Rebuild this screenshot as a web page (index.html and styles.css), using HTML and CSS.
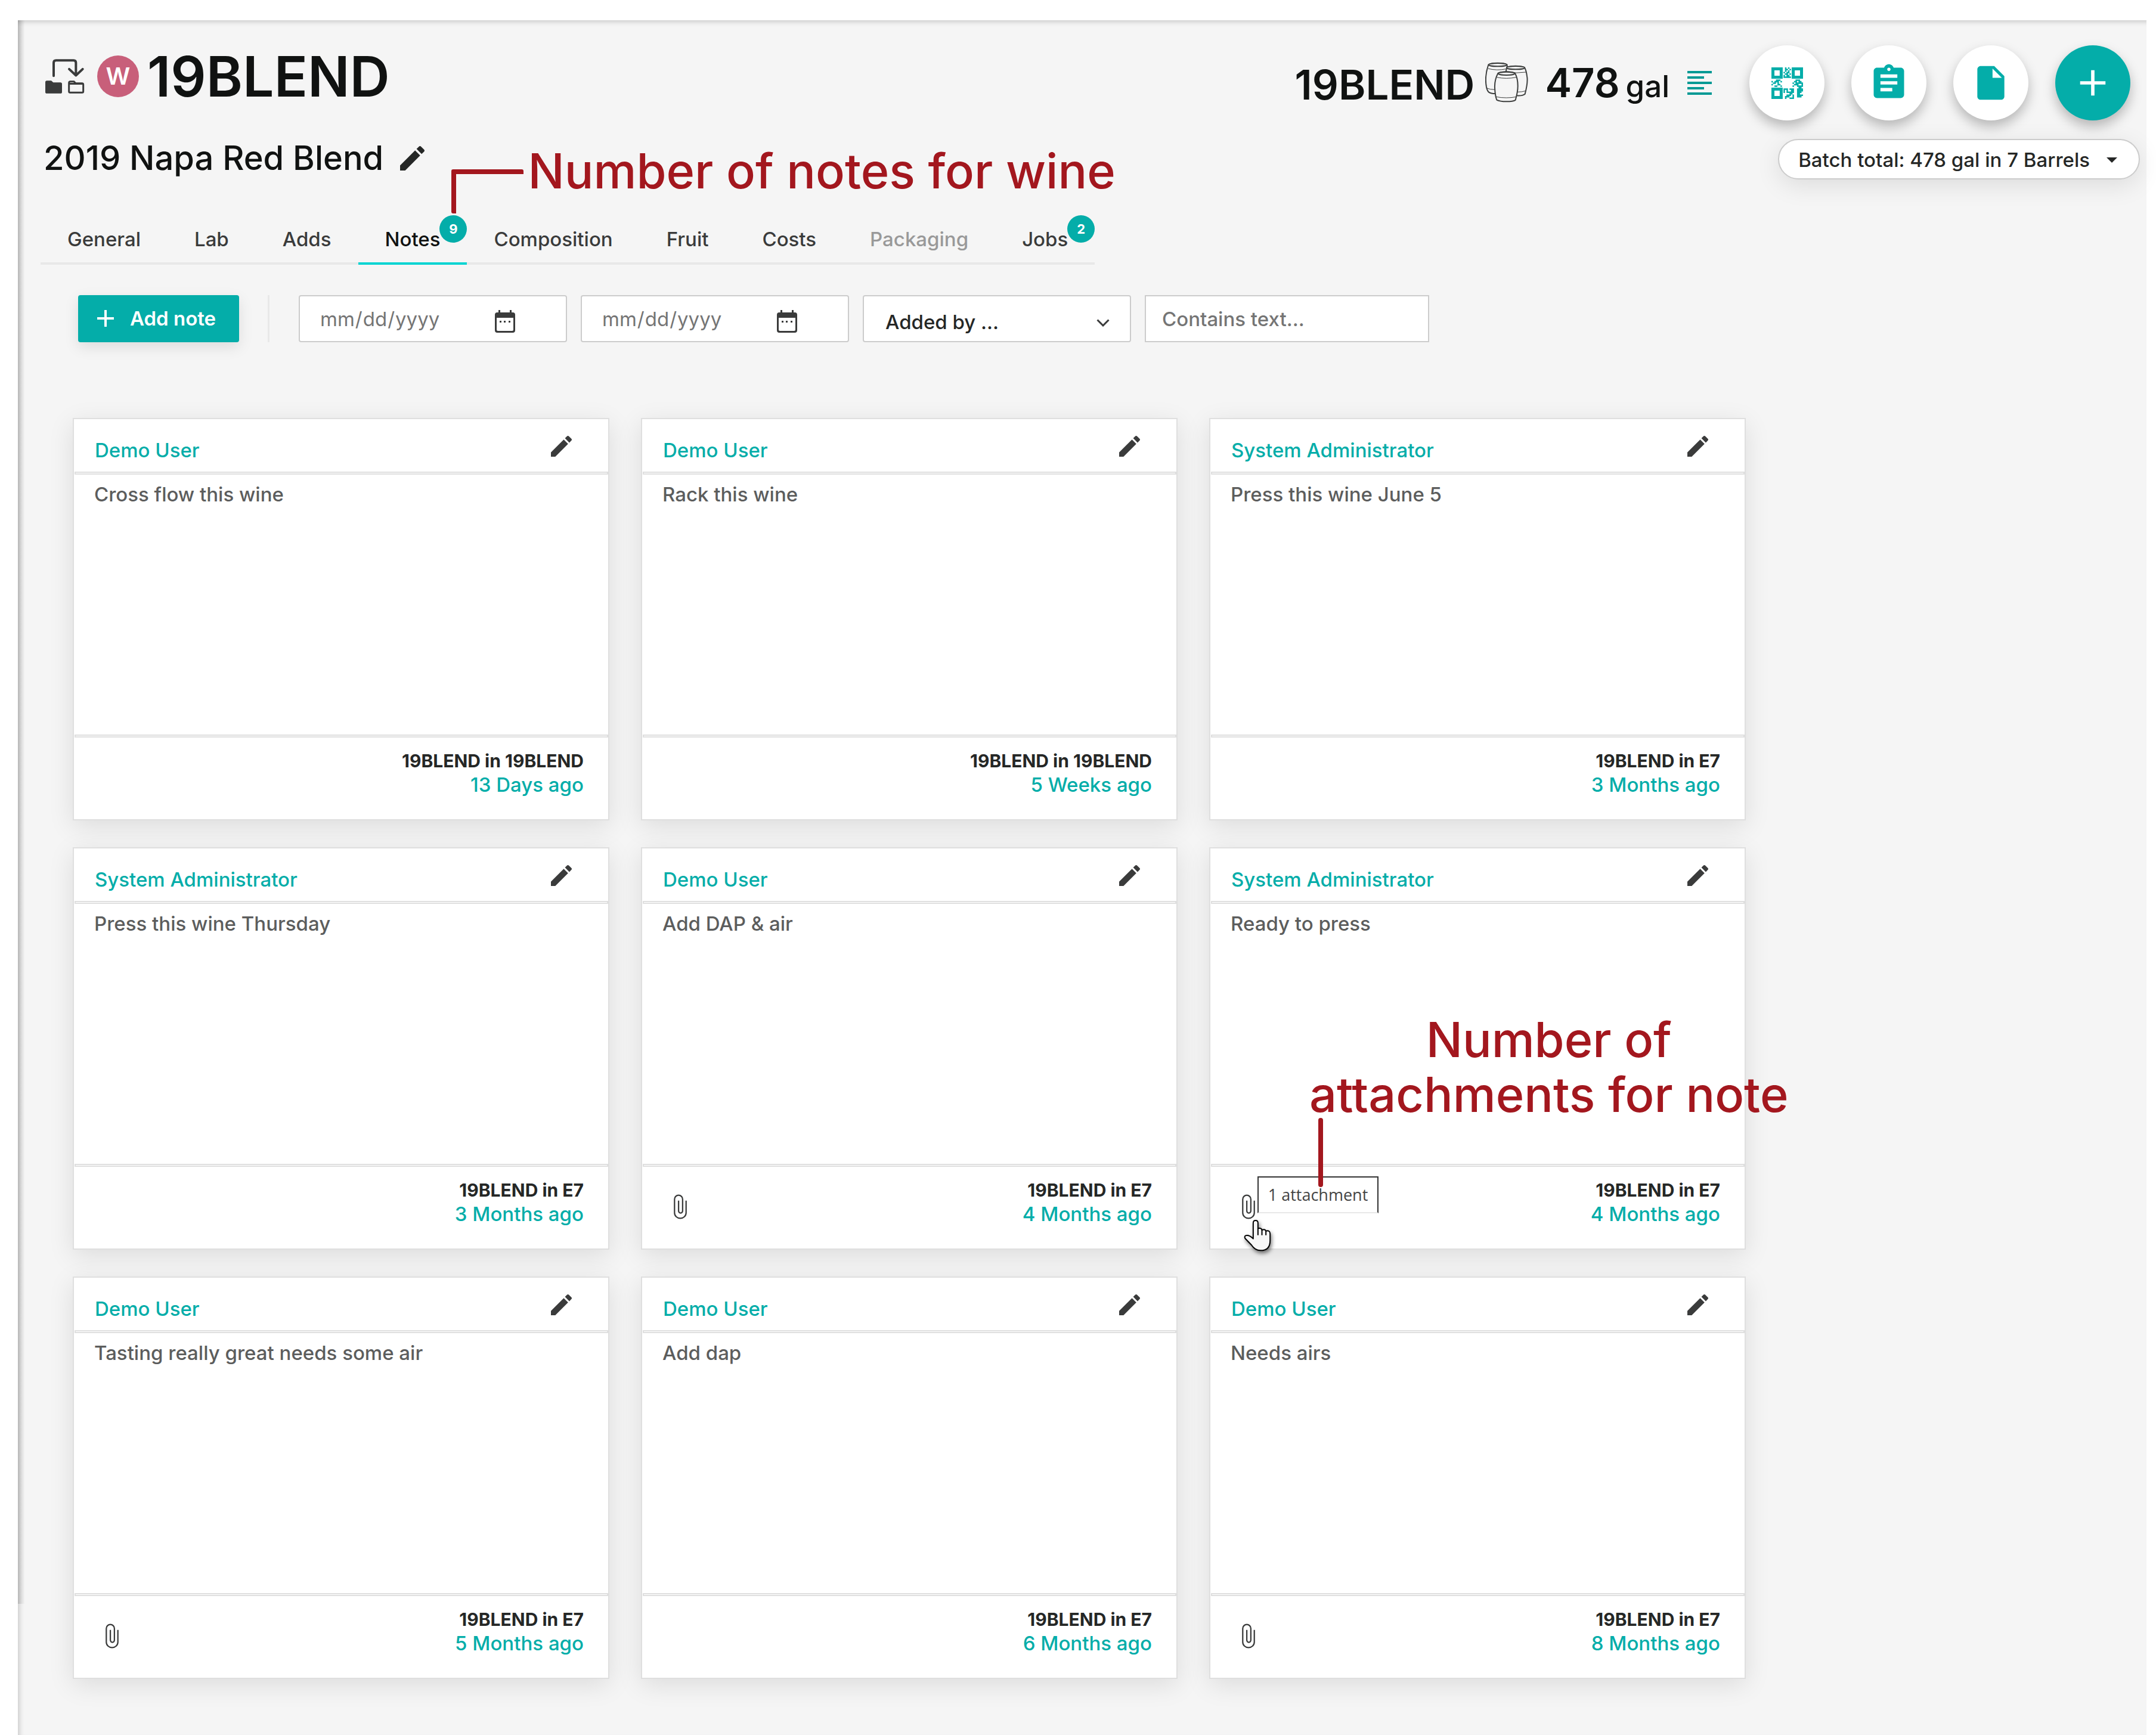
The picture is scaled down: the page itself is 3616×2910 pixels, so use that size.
FILE: index.html
```html
<!DOCTYPE html>
<html lang="en">
<head>
    <meta charset="UTF-8">
    <meta name="viewport" content="width=device-width, initial-scale=1.0">
    <title>19BLEND - Notes</title>
    <link rel="stylesheet" href="styles.css">
</head>
<body>

    <!-- Shared icons -->
    <svg class="icon-defs" aria-hidden="true">
        <symbol id="icon-pencil" viewBox="3 3 18 18">
            <path d="M3 17.25V21h3.75L17.81 9.94l-3.75-3.75L3 17.25zM20.71 7.04c.39-.39.39-1.02 0-1.41l-2.34-2.34c-.39-.39-1.02-.39-1.41 0l-1.83 1.83 3.75 3.75 1.83-1.83z"/>
        </symbol>
        <symbol id="icon-clip" viewBox="36 128 68 128">
            <path d="M100 160V224a30 28 0 0 1-60 0V153a21 21 0 0 1 42 0V213a10 11 0 0 1-21 0V160" fill="none" stroke="currentColor" stroke-width="7"/>
        </symbol>
        <symbol id="icon-calendar" viewBox="0 0 34 38">
            <path fill-rule="evenodd" d="M6 0h3v4h16V0h3v4h2q4 0 4 4v26q0 4-4 4H4q-4 0-4-4V8q0-4 4-4h2zM3 13v20q0 2 2 2h24q2 0 2-2V13z"/>
            <path d="M8 18h3v3H8zM15 18h3v3h-3zM23 18h3v3h-3z"/>
        </symbol>
    </svg>

    <main class="panel">
        <header class="header">
            <div class="header-left">
                <div class="title-row">
                    <svg class="icon-transfer" viewBox="0 0 198 176">
                        <path d="M42 84V18q0-12 12-12h88q12 0 12 12v62M120 50l34 32 34-32" fill="none" stroke="#3a3b3b" stroke-width="12" stroke-linecap="round" stroke-linejoin="round"/>
                        <path d="M0 116q0-8 8-8h22l10 9h36q8 0 8 8v40q0 8-8 8H8q-8 0-8-8z" fill="#3a3b3b"/>
                        <path d="M119 120q0-7 7-7h18l9 9h32q6 0 6 6v34q0 6-6 6h-60q-6 0-6-6zM119 124h72" fill="none" stroke="#3a3b3b" stroke-width="9"/>
                    </svg>
                    <span class="wine-badge">W</span>
                    <h1>19BLEND</h1>
                </div>
                <div class="subtitle-row">
                    <h2>2019 Napa Red Blend</h2>
                    <button class="icon-button" aria-label="Edit name"><svg class="pencil-large"><use href="#icon-pencil"/></svg></button>
                </div>
            </div>

            <div class="header-right">
                <div class="action-row">
                    <div class="summary">
                        <span class="summary-name">19BLEND</span>
                        <svg class="icon-barrels" viewBox="40 40 216 202">
                            <path d="M56 53Q36 110 46 165Q50 184 58 191Q72 200 100 198L150 120L150 53Q138 44 103 44T56 53z"/>
                            <ellipse cx="103" cy="53" rx="45" ry="8"/>
                            <path class="hoop" d="M54 72q45 12 90 2M46 170q18 8 44 8"/>
                            <path d="M148 67Q142 90 142 120L198 208Q228 210 240 200Q256 140 250 110Q246 80 238 67Q220 59 193 59T148 67z"/>
                            <ellipse cx="193" cy="68" rx="45" ry="8"/>
                            <path class="hoop" d="M150 88q45 10 94 2M202 190q24 0 42-6"/>
                            <path d="M104 96Q86 130 88 170Q90 210 98 230Q112 238 147 238T192 230Q204 190 204 160Q204 120 190 96Q175 88 147 88T104 96z"/>
                            <ellipse cx="147" cy="97" rx="42" ry="8"/>
                            <path class="hoop" d="M98 116q48 10 98 0M94 214q52 10 104 0"/>
                        </svg>
                        <span class="summary-amount">478<small>gal</small></span>
                        <svg class="icon-lines" viewBox="0 0 41 41">
                            <path d="M0 0h41v4H0zM0 9h28v4H0zM0 18h41v4H0zM0 27h28v4H0zM0 36h41v4H0z"/>
                        </svg>
                    </div>
                    <div class="actions">
                        <button class="round-button" aria-label="QR code">
                            <svg class="icon-qr" viewBox="0 0 21 21">
                                <path fill-rule="evenodd" d="M0 0h7.5v7.5H0zM2 2v3.5h3.5V2zM13.5 0H21v7.5h-7.5zM15.5 2v3.5H19V2zM0 13.5h7.5V21H0zM2 15.5V19h3.5v-3.5z"/>
                                <path d="M9 0h1v2H9zM11 0h1v1h-1zM10 1h1v1h-1zM12 1h1v1h-1zM8 3h1v1H8zM9 2h1v1H9zM11 2h1v2h-1zM10 3h1v1h-1zM9 4h2v1H9zM12 4h1v1h-1zM8 5h1v1H8zM10 5h1v2h-1zM11 5h1v1h-1zM8 6h5v1H8zM3 8h3v1H3zM6 9h1v1H6zM0 9h1v1H0zM2 9h2v1H2zM1 10h2v1H1zM4 9h1v3H4zM0 11h1v1H0zM2 12h2v1H2zM5 11h1v1H5zM6 12h1v1H6zM16 8h3v1h-3zM15 9h2v1h-2zM18 9h2v1h-2zM14 10h1v1h-1zM16 10h3v1h-3zM15 11h3v1h-3zM19 10h2v1h-2zM20 11h1v2h-1zM14 12h1v1h-1zM17 12h3v1h-3zM18 13h2v2h-2zM8 14h3v1H8zM12 14h3v1h-3zM10 15h1v2h-1zM8 15h1v2H8zM13 15h2v2h-2zM11 16h3v1h-3zM12 17h2v1h-2zM10 18h3v1h-3zM14 18h1v3h-1zM9 19h3v1H9zM9 20h1v1H9zM12 20h3v1h-3zM20 14h1v2h-1zM17 14h2v2h-2zM17 16h2v4h-2zM19 15h1v2h-1zM19 18h2v1h-2zM18 19h2v1h-2z"/>
                            </svg>
                        </button>
                        <button class="round-button" aria-label="Tasks">
                            <svg viewBox="0 0 24 24"><path d="M19 3h-4.180C14.400 1.840 13.300 1 12 1s-2.400.84-2.820 2H5c-1.100 0-2 .9-2 2v14c0 1.100.9 2 2 2h14c1.100 0 2-.9 2-2V5c0-1.100-.9-2-2-2zm-7 0c.55 0 1 .45 1 1s-.45 1-1 1-1-.45-1-1 .45-1 1-1zm2 14H7v-2h7v2zm3-4H7v-2h10v2zm0-4H7V7h10v2z"/></svg>
                        </button>
                        <button class="round-button" aria-label="Document">
                            <svg viewBox="0 0 24 24"><path d="M6 2c-1.100 0-1.990.9-1.990 2L4 20c0 1.100.89 2 1.990 2H18c1.100 0 2-.9 2-2V8l-6-6H6zm7 7V3.500L18.500 9H13z"/></svg>
                        </button>
                        <button class="round-button primary" aria-label="New">
                            <svg viewBox="0 0 24 24"><path d="M11 4.500h2V11h6.500v2H13v6.500h-2V13H4.500v-2H11z"/></svg>
                        </button>
                    </div>
                </div>
                <button class="batch-total">Batch total: 478 gal in 7 Barrels <span class="caret"></span></button>
            </div>
        </header>

        <nav class="tabs">
            <a href="#" class="tab">General</a>
            <a href="#" class="tab">Lab</a>
            <a href="#" class="tab">Adds</a>
            <div class="tab-wrap">
                <a href="#" class="tab active">Notes<span class="count">9</span></a>
                <div class="callout callout-notes">
                    <span class="elbow"></span>
                    <p>Number of notes for wine</p>
                </div>
            </div>
            <a href="#" class="tab">Composition</a>
            <a href="#" class="tab">Fruit</a>
            <a href="#" class="tab">Costs</a>
            <a href="#" class="tab disabled">Packaging</a>
            <a href="#" class="tab">Jobs<span class="count">2</span></a>
        </nav>

        <form class="toolbar">
            <button type="button" class="add-note">
                <svg viewBox="0 0 28 28"><path d="M12 0h4v12h12v4H16v12h-4V16H0v-4h12z"/></svg>
                Add note
            </button>
            <span class="divider"></span>
            <label class="field">
                <input type="date" aria-label="From date">
                <svg class="icon-calendar"><use href="#icon-calendar"/></svg>
            </label>
            <label class="field">
                <input type="date" aria-label="To date">
                <svg class="icon-calendar"><use href="#icon-calendar"/></svg>
            </label>
            <label class="field">
                <select aria-label="Added by">
                    <option>Added by ...</option>
                </select>
                <svg class="icon-chevron" viewBox="0 0 22 13"><path d="M1.500 1.500l9.500 9.500 9.500-9.500" fill="none" stroke="#3a3b3b" stroke-width="3"/></svg>
            </label>
            <input type="text" class="search" placeholder="Contains text..." aria-label="Contains text">
        </form>

        <section class="notes">
            <article class="note">
                <div class="note-head">
                    <a href="#">Demo User</a>
                    <button class="icon-button" aria-label="Edit note"><svg class="pencil"><use href="#icon-pencil"/></svg></button>
                </div>
                <hr>
                <p class="note-body">Cross flow this wine</p>
                <hr>
                <div class="note-foot">
                    <div class="note-meta"><strong>19BLEND in 19BLEND</strong><span>13 Days ago</span></div>
                </div>
            </article>

            <article class="note">
                <div class="note-head">
                    <a href="#">Demo User</a>
                    <button class="icon-button" aria-label="Edit note"><svg class="pencil"><use href="#icon-pencil"/></svg></button>
                </div>
                <hr>
                <p class="note-body">Rack this wine</p>
                <hr>
                <div class="note-foot">
                    <div class="note-meta"><strong>19BLEND in 19BLEND</strong><span>5 Weeks ago</span></div>
                </div>
            </article>

            <article class="note">
                <div class="note-head">
                    <a href="#">System Administrator</a>
                    <button class="icon-button" aria-label="Edit note"><svg class="pencil"><use href="#icon-pencil"/></svg></button>
                </div>
                <hr>
                <p class="note-body">Press this wine June 5</p>
                <hr>
                <div class="note-foot">
                    <div class="note-meta"><strong>19BLEND in E7</strong><span>3 Months ago</span></div>
                </div>
            </article>

            <article class="note">
                <div class="note-head">
                    <a href="#">System Administrator</a>
                    <button class="icon-button" aria-label="Edit note"><svg class="pencil"><use href="#icon-pencil"/></svg></button>
                </div>
                <hr>
                <p class="note-body">Press this wine Thursday</p>
                <hr>
                <div class="note-foot">
                    <div class="note-meta"><strong>19BLEND in E7</strong><span>3 Months ago</span></div>
                </div>
            </article>

            <article class="note">
                <div class="note-head">
                    <a href="#">Demo User</a>
                    <button class="icon-button" aria-label="Edit note"><svg class="pencil"><use href="#icon-pencil"/></svg></button>
                </div>
                <hr>
                <p class="note-body">Add DAP &amp; air</p>
                <hr>
                <div class="note-foot">
                    <div class="attachment">
                        <button class="icon-button" aria-label="Attachments"><svg class="clip"><use href="#icon-clip"/></svg></button>
                    </div>
                    <div class="note-meta"><strong>19BLEND in E7</strong><span>4 Months ago</span></div>
                </div>
            </article>

            <article class="note">
                <div class="note-head">
                    <a href="#">System Administrator</a>
                    <button class="icon-button" aria-label="Edit note"><svg class="pencil"><use href="#icon-pencil"/></svg></button>
                </div>
                <hr>
                <p class="note-body">Ready to press</p>
                <hr>
                <div class="note-foot">
                    <div class="attachment">
                        <button class="icon-button" aria-label="Attachments"><svg class="clip"><use href="#icon-clip"/></svg></button>
                        <span class="tooltip" role="tooltip">1 attachment</span>
                        <svg class="pointer" viewBox="44 258 140 162">
                            <path d="M94 356V277q0-13 12-13t12 13v27q18-4 20 8 17-6 20 5 21-5 21 14v34q0 50-48 50-28 0-46-28L53 354q-6-15 10-15 14 0 31 17z" fill="#f7f7f7" stroke="#000" stroke-width="6" stroke-linejoin="round"/>
                            <path d="M118 302v36M138 312v26M158 318v20" fill="none" stroke="#000" stroke-width="6"/>
                        </svg>
                        <div class="callout callout-attachments">
                            <p>Number of<br>attachments for note</p>
                            <span class="stem"></span>
                        </div>
                    </div>
                    <div class="note-meta"><strong>19BLEND in E7</strong><span>4 Months ago</span></div>
                </div>
            </article>

            <article class="note">
                <div class="note-head">
                    <a href="#">Demo User</a>
                    <button class="icon-button" aria-label="Edit note"><svg class="pencil"><use href="#icon-pencil"/></svg></button>
                </div>
                <hr>
                <p class="note-body">Tasting really great needs some air</p>
                <hr>
                <div class="note-foot">
                    <div class="attachment">
                        <button class="icon-button" aria-label="Attachments"><svg class="clip"><use href="#icon-clip"/></svg></button>
                    </div>
                    <div class="note-meta"><strong>19BLEND in E7</strong><span>5 Months ago</span></div>
                </div>
            </article>

            <article class="note">
                <div class="note-head">
                    <a href="#">Demo User</a>
                    <button class="icon-button" aria-label="Edit note"><svg class="pencil"><use href="#icon-pencil"/></svg></button>
                </div>
                <hr>
                <p class="note-body">Add dap</p>
                <hr>
                <div class="note-foot">
                    <div class="note-meta"><strong>19BLEND in E7</strong><span>6 Months ago</span></div>
                </div>
            </article>

            <article class="note">
                <div class="note-head">
                    <a href="#">Demo User</a>
                    <button class="icon-button" aria-label="Edit note"><svg class="pencil"><use href="#icon-pencil"/></svg></button>
                </div>
                <hr>
                <p class="note-body">Needs airs</p>
                <hr>
                <div class="note-foot">
                    <div class="attachment">
                        <button class="icon-button" aria-label="Attachments"><svg class="clip"><use href="#icon-clip"/></svg></button>
                    </div>
                    <div class="note-meta"><strong>19BLEND in E7</strong><span>8 Months ago</span></div>
                </div>
            </article>
        </section>
    </main>

</body>
</html>
```
FILE: styles.css
```css
* {
    box-sizing: border-box;
}
body {
    margin: 0;
    padding: 34px 16px 0 30px;
    background: #fff;
    font-family: Inter, "Open Sans", sans-serif;
    font-size: 33px;
    line-height: 48px;
    font-weight: 500;
    color: #3a3b3b;
}
h1, h2, p {
    margin: 0;
}
a {
    color: inherit;
    text-decoration: none;
}
button, input, select {
    font: inherit;
    color: inherit;
}
svg {
    display: block;
    flex: none;
    fill: currentColor;
}
.icon-defs {
    position: absolute;
    width: 0;
    height: 0;
}
.icon-button {
    display: block;
    padding: 0;
    border: none;
    background: none;
    cursor: pointer;
}

.panel {
    position: relative;
    min-height: calc(100vh - 34px);
    padding: 42px 11px 93px 38px;
    background: #f5f5f5;
    box-shadow: inset 10px 0 10px -8px rgba(0, 0, 0, 0.2), inset 0 10px 10px -8px rgba(0, 0, 0, 0.2);
}
/* darker edge left by the side menu */
.panel::before {
    content: "";
    position: absolute;
    top: 0;
    bottom: 220px;
    left: 0;
    width: 12px;
    background: linear-gradient(to right, rgba(0, 0, 0, 0.14), rgba(0, 0, 0, 0));
}

/* Header */
.header {
    display: flex;
    justify-content: space-between;
    align-items: flex-start;
}
.header-left {
    padding: 12px 0 0 5px;
}
.title-row {
    display: flex;
    align-items: center;
}
.icon-transfer {
    width: 66px;
    height: 59px;
    margin: 0 21px 0 3px;
}
.wine-badge {
    width: 70px;
    height: 70px;
    margin-right: 14px;
    border-radius: 50%;
    background: #c85f7a;
    color: #fff;
    font-size: 40px;
    line-height: 70px;
    font-weight: 600;
    text-align: center;
}
h1 {
    font-size: 93px;
    line-height: 80px;
    font-weight: 600;
    color: #101211;
}
.subtitle-row {
    display: flex;
    align-items: center;
    gap: 28px;
    margin-top: 65px;
    color: #252726;
}
h2 {
    font-size: 56px;
    line-height: 64px;
    font-weight: 500;
    color: #101211;
}
.pencil-large {
    width: 41px;
    height: 41px;
}
.header-right {
    display: flex;
    flex-direction: column;
    align-items: flex-end;
    gap: 31px;
}
.action-row {
    display: flex;
    align-items: center;
    gap: 63px;
    margin-right: 16px;
}
.summary {
    display: flex;
    align-items: center;
    padding-top: 6px;
    color: #101211;
    font-size: 69px;
    line-height: 80px;
    font-weight: 600;
}
.icon-barrels {
    width: 72px;
    height: 68px;
    margin: 0 28px 8px 18px;
    fill: #f5f5f5;
    stroke: #3d3f3e;
    stroke-width: 6;
}
.icon-barrels .hoop {
    fill: none;
    stroke-width: 3;
}
.summary-amount {
    display: flex;
    align-items: baseline;
    gap: 10px;
    font-size: 67px;
}
.summary small {
    font-size: 51px;
    font-weight: 500;
}
.icon-lines {
    width: 41px;
    height: 41px;
    margin: 0 0 6px 30px;
    color: #009994;
}
.actions {
    display: flex;
    gap: 45px;
}
.round-button {
    display: flex;
    align-items: center;
    justify-content: center;
    width: 126px;
    height: 126px;
    padding: 0;
    border: none;
    border-radius: 50%;
    background: #fff;
    color: #04ada9;
    box-shadow: 0 10px 20px rgba(0, 0, 0, 0.26);
    cursor: pointer;
}
.round-button svg {
    width: 68px;
    height: 68px;
}
.round-button .icon-qr {
    width: 53px;
    height: 53px;
}
.round-button.primary {
    background: #04ada9;
    color: #fff;
}
.batch-total {
    display: flex;
    align-items: center;
    gap: 28px;
    height: 68px;
    padding: 2px 36px 0 32px;
    border: 2px solid #ccc;
    border-radius: 34px;
    background: #fff;
    color: #252726;
    box-shadow: 0 10px 40px rgba(0, 0, 0, 0.1);
    cursor: pointer;
}
.caret {
    border: 9px solid transparent;
    border-top-color: #252726;
    border-bottom: none;
}

/* Tabs */
.tabs {
    display: flex;
    width: fit-content;
    margin-top: 54px;
    border-bottom: 4px solid #e8e8e8;
}
.tab-wrap {
    position: relative;
}
.tab {
    position: relative;
    display: block;
    margin-bottom: -4px;
    padding: 22px 45px 15px;
    border-bottom: 4px solid transparent;
}
.tab.active {
    border-bottom-color: #00d4d2;
    color: #101211;
}
.tab.disabled {
    color: #999;
}
.count {
    position: absolute;
    top: 6px;
    right: 0;
    width: 46px;
    height: 46px;
    border-radius: 50%;
    background: #04ada9;
    color: #fff;
    font-size: 22px;
    line-height: 46px;
    font-weight: 700;
    text-align: center;
}

/* Toolbar */
.toolbar {
    display: flex;
    gap: 23px;
    height: 79px;
    margin-top: 51px;
    padding-left: 63px;
}
.add-note {
    display: flex;
    align-items: center;
    gap: 27px;
    width: 270px;
    padding: 0 0 2px 32px;
    border: none;
    border-radius: 4px;
    background: #04ada9;
    color: #fff;
    font-weight: 600;
    white-space: nowrap;
    box-shadow: 0 8px 24px rgba(0, 0, 0, 0.1);
    cursor: pointer;
}
.add-note svg {
    width: 28px;
    height: 28px;
}
.divider {
    width: 3px;
    margin: 0 26px 0 25px;
    background: #e8e8e8;
}
.field {
    position: relative;
    width: 450px;
}
.field input, .field select, .search {
    width: 100%;
    height: 79px;
    padding: 0 33px;
    border: 2px solid #ccc;
    border-radius: 4px;
    background: #fff;
}
.field input {
    color: #757575;
    font-weight: 400;
}
.field input::-webkit-calendar-picker-indicator {
    opacity: 0;
}
.field select {
    appearance: none;
    padding: 10px 36px 0;
    color: #252726;
}
.search {
    width: 477px;
    padding: 0 27px;
    border-radius: 0;
}
.search::placeholder {
    color: #757575;
}
.icon-calendar {
    position: absolute;
    top: 25px;
    right: 87px;
    width: 34px;
    height: 38px;
    pointer-events: none;
}
.icon-chevron {
    position: absolute;
    top: 40px;
    right: 36px;
    width: 22px;
    height: 13px;
    pointer-events: none;
}

/* Notes */
.notes {
    display: grid;
    grid-template-columns: repeat(3, 1fr);
    gap: 45px 53px;
    max-width: 2860px;
    margin-top: 127px;
    padding-left: 54px;
}
.note {
    border: 2px solid #dfdfdf;
    background: #fff;
    box-shadow: 0 10px 40px rgba(0, 0, 0, 0.1);
}
.note hr {
    height: 5px;
    margin: 0 0 0 1px;
    border: 2px solid #dfdfdf;
}
.note-head {
    display: flex;
    justify-content: space-between;
    align-items: flex-start;
    height: 88px;
    padding: 28px 61px 0 35px;
    color: #04ada9;
}
.note-head .icon-button {
    color: #3a3b3b;
}
.pencil {
    width: 35px;
    height: 35px;
}
.note-body {
    min-height: 436px;
    padding: 9px 34px;
    color: #5c5d5d;
}
.note-foot {
    display: flex;
    height: 137px;
    padding: 19px 41px 0 53px;
}
.attachment {
    position: relative;
    height: 42px;
    margin-top: 27px;
}
.clip {
    width: 22px;
    height: 42px;
}
.note-meta {
    display: flex;
    flex-direction: column;
    margin-left: auto;
    text-align: right;
    line-height: 40px;
    color: #04ada9;
}
.note-meta strong {
    font-size: 30px;
    font-weight: 700;
    color: #252726;
}
.tooltip {
    position: absolute;
    top: -30px;
    left: 26px;
    width: 203px;
    height: 62px;
    border: 2px solid #333;
    border-bottom-color: #e8e8e8;
    background: #fff;
    color: #444;
    font-family: "Open Sans", sans-serif;
    font-size: 27px;
    line-height: 58px;
    font-weight: 400;
    text-align: center;
}
.pointer {
    position: absolute;
    top: 42px;
    left: 2px;
    width: 47px;
    height: 54px;
    filter: drop-shadow(2px 4px 3px rgba(0, 0, 0, 0.5));
}

/* Callouts */
.callout {
    position: absolute;
    z-index: 1;
    color: #a3171e;
    font-size: 81px;
    line-height: 92px;
    white-space: nowrap;
    text-align: center;
}
.callout-notes {
    display: flex;
    gap: 8px;
    top: -114px;
    left: 156px;
}
.elbow {
    width: 121px;
    height: 74px;
    margin-top: 43px;
    border-top: 8px solid #a3171e;
    border-left: 8px solid #a3171e;
    border-radius: 3px;
}
.callout-attachments {
    top: -305px;
    left: 113px;
}
.stem {
    position: absolute;
    top: 177px;
    left: 15px;
    width: 8px;
    height: 116px;
    border-radius: 4px;
    background: #a3171e;
}
```
